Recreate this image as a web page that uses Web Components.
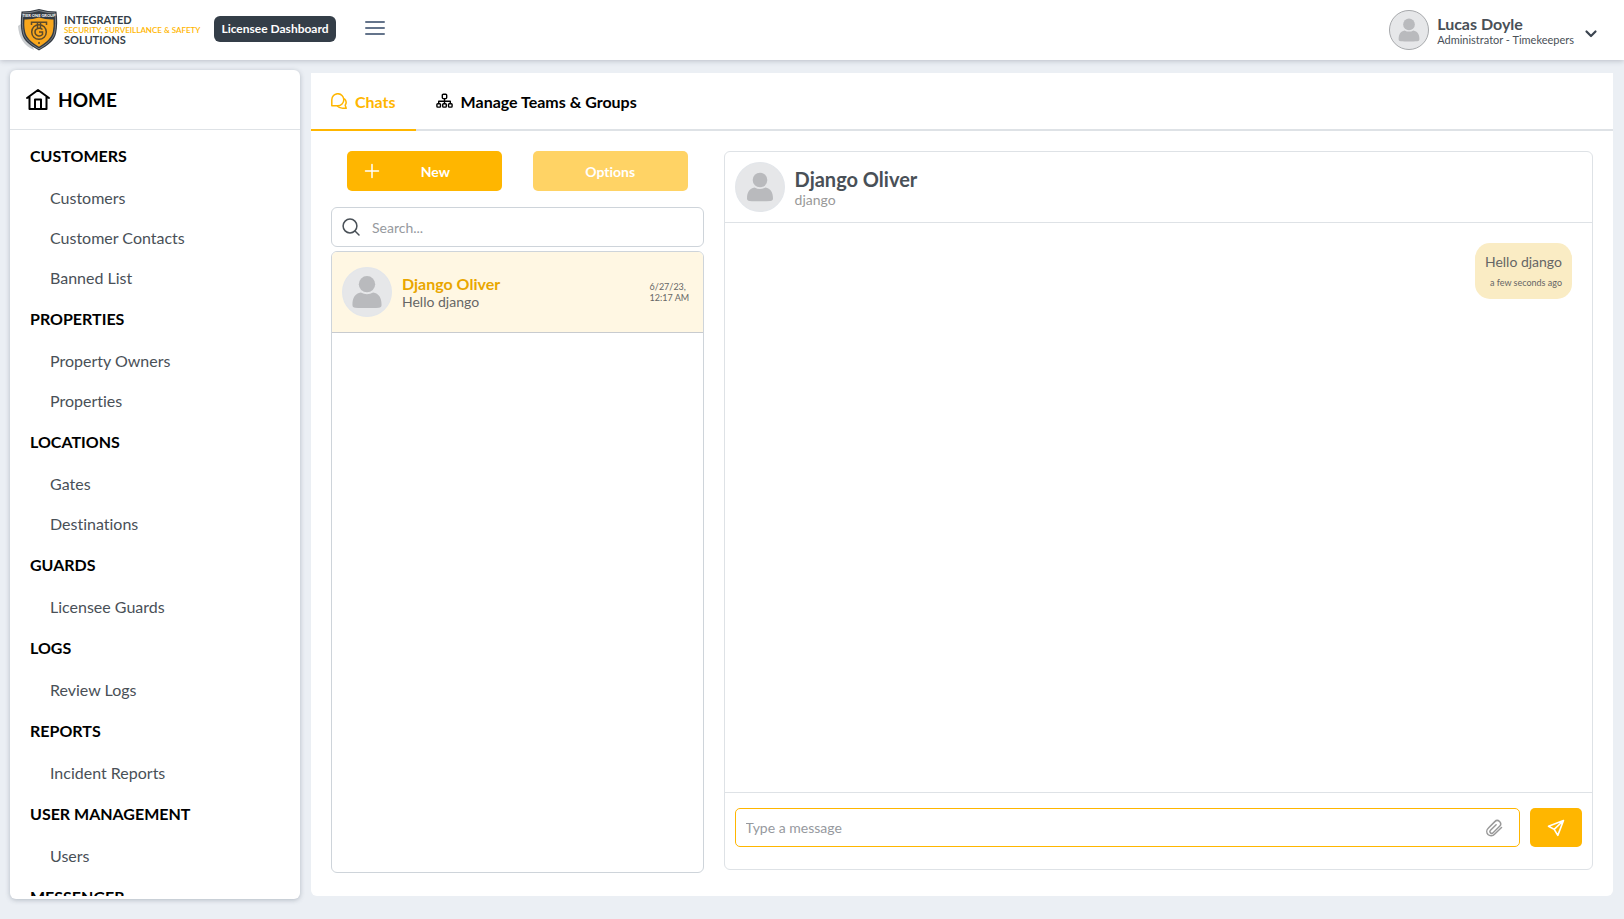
<!DOCTYPE html>
<html lang="en">
<head>
<meta charset="utf-8">
<meta name="viewport" content="width=device-width, initial-scale=1">
<title>Licensee Dashboard</title>
<style>
  html { height: 100%; }
  body {
    margin: 0; min-height: 100%; background: #ebeff4;
    font: 16px/24px Lato, "Open Sans", sans-serif; font-variant-ligatures: none; color: #495057;
    --accent: #ffb600; --line: #dee2e6; --edge: #ced4da;
  }
</style>
</head>
<body>
<dashboard-app></dashboard-app>

<template id="dashboard-app">
  <style>
    :host { display: block; }
    .page {
      display: grid; grid-template: minmax(0, 1fr) / 290px minmax(0, 1fr); gap: 11px;
      box-sizing: border-box; height: calc(100vh - 60px); padding: 10px 11px 20px 10px;
    }
    main { margin: 3px 0; min-height: 0; }
  </style>
  <top-bar></top-bar>
  <div class="page">
    <side-menu></side-menu>
    <main><chat-workspace></chat-workspace></main>
  </div>
</template>

<template id="top-bar">
  <style>
    :host { display: block; position: relative; background: #fff; box-shadow: 0 1px 5px rgba(60, 70, 90, .28); }
    header { display: flex; align-items: center; height: 60px; box-sizing: border-box; padding: 0 25px 0 17px; }
    .badge { margin: 0 0 2px 14px; padding: 0 7px; border-radius: 6px; background: #343e48; color: #fff; font-size: 12px; font-weight: 700; line-height: 26px; }
    button { border: 0; background: none; padding: 0; font: inherit; color: inherit; display: flex; cursor: pointer; }
    .menu { margin: 0 0 4px 28px; color: #64748b; }
    .user { margin-left: auto; align-items: center; text-align: left; gap: 8px; }
    .who { display: grid; line-height: 15px; padding: 2px 1px 0 0; }
    .name { font-weight: 700; font-size: 16px; line-height: 17px; }
    .role { font-size: 11px; }
    .arrow { margin-top: 8px; }
  </style>
  <header>
    <brand-logo></brand-logo>
    <span class="badge">Licensee Dashboard</span>
    <button class="menu" type="button" aria-label="Toggle menu">
      <svg width="22" height="18" viewBox="0 0 22 18" fill="none" stroke="currentColor" stroke-width="2" stroke-linecap="round"><path d="M2 3h18M2 9h18M2 15h18"/></svg>
    </button>
    <button class="user" type="button">
      <user-avatar style="--size:40px;--ring:#a3a5a8"></user-avatar>
      <span class="who"><span class="name">Lucas Doyle</span><span class="role">Administrator - Timekeepers</span></span>
      <svg class="arrow" width="16" height="16" viewBox="0 0 16 16" fill="none" stroke="#3b4550" stroke-width="2.2" stroke-linecap="round" stroke-linejoin="round"><path d="M3.500 5.500 8 10l4.500-4.500"/></svg>
    </button>
  </header>
</template>

<template id="brand-logo">
  <style>
    :host { display: block; }
    a { display: flex; align-items: center; gap: 5px; text-decoration: none; color: #343e48; }
    .words { display: grid; font-weight: 700; font-size: 11px; line-height: 10px; white-space: nowrap; }
    .mid { color: var(--accent); font-size: 8px; font-weight: 600; }
  </style>
  <a href="#">
    <svg width="42" height="44" viewBox="0 0 42 44" aria-hidden="true">
      <path d="M1 18c1 12 6 20 16 24L7 14z" fill="#c9cccf"/>
      <path d="M4.500 3.500Q13 3.500 22 1q9 2.500 17.500 2.500c1 8 1 16-.5 22-1.500 7-8 12-17 17-9-5-15.500-10-17-17-1.500-6-1.500-14-.5-22z" fill="#343b43"/>
      <path d="M6 5Q14 5 22 2.500 30 5 38 5c.8 8 .8 14-.5 20-1.500 6-7 11-15.500 15.800C13.500 36 8 31 6.500 25 5.200 19 5.200 13 6 5z" fill="none" stroke="#a9adb0" stroke-width=".6"/>
      <path d="M7.500 11.500Q15 11.800 22 9.500q7 2.300 14.500 2 .5 7-.7 12.500C34.500 29.500 30 34 22 38.800 14 34 9.500 29.500 8.200 24 7 18.500 7.200 15 7.500 11.500z" fill="#f9a71d"/>
      <g fill="none" stroke="#5b4a2b" stroke-width="1.500">
        <circle cx="22" cy="24" r="7.300"/>
        <path d="M14.500 17v-2.700h15V17M20.500 14.500V21M23.500 14.500V21M25.500 21.500c-3-2.500-7.500-1-7.500 2.500 0 4 5 5 7.500 2.500V24H22"/>
      </g>
      <circle cx="22" cy="35" r="1" fill="#5b4a2b"/>
      <text x="22" y="9" text-anchor="middle" font-family="Lato, sans-serif" font-size="4" font-weight="700" fill="#fff">TIER ONE GROUP</text>
    </svg>
    <span class="words"><span>INTEGRATED</span><span class="mid">SECURITY, SURVEILLANCE &amp; SAFETY</span><span>SOLUTIONS</span></span>
  </a>
</template>

<template id="user-avatar">
  <style>
    :host { display: block; flex: none; width: var(--size, 50px); height: var(--size, 50px); }
    svg { display: block; width: 100%; height: 100%; }
    .ring { stroke: var(--ring, #e3e6ea); }
    .person { transform: scale(var(--person, 1)); transform-origin: 50% 50%; }
  </style>
  <svg viewBox="0 0 50 50" aria-hidden="true">
    <circle class="ring" cx="25" cy="25" r="24.400" fill="#e6e7e9" stroke-width="1.200"/>
    <g class="person" fill="#b9babd">
      <circle cx="25" cy="18" r="7.300"/>
      <path d="M12 36.500c0-6.500 2.500-10 7.500-11q5.500 3 11 0c5 1 7.500 4.500 7.500 11 0 1.500-1 2.500-2.500 2.500-6 .4-15 .4-21 0-1.500 0-2.500-1-2.500-2.500z"/>
    </g>
  </svg>
</template>

<template id="side-menu">
  <style>
    :host { display: flex; flex-direction: column; box-sizing: border-box; min-height: 0; padding-bottom: 3px; background: #fff; border-radius: 6px; box-shadow: 0 1px 5px rgba(60, 70, 90, .32); }
    .home { display: flex; flex: none; align-items: center; gap: 7px; height: 59px; padding-left: 15px; border-bottom: 1px solid var(--line); color: #000; font-size: 19px; font-weight: 700; text-decoration: none; }
    nav { flex: 1; min-height: 0; overflow: hidden; padding-top: 5px; }
  </style>
  <a class="home" href="#">
    <svg width="26" height="24" viewBox="0 0 26 24" fill="none" stroke="currentColor" stroke-width="2" stroke-linejoin="round" stroke-linecap="round"><path d="M2 10 13 2l11 8M4.500 8.500V21h17V8.500M10 21v-9.500h6V21"/></svg>
    <span>HOME</span>
  </a>
  <nav aria-label="Main">
    <menu-section heading="CUSTOMERS" items="Customers|Customer Contacts|Banned List"></menu-section>
    <menu-section heading="PROPERTIES" items="Property Owners|Properties"></menu-section>
    <menu-section heading="LOCATIONS" items="Gates|Destinations"></menu-section>
    <menu-section heading="GUARDS" items="Licensee Guards"></menu-section>
    <menu-section heading="LOGS" items="Review Logs"></menu-section>
    <menu-section heading="REPORTS" items="Incident Reports"></menu-section>
    <menu-section heading="USER MANAGEMENT" items="Users"></menu-section>
    <menu-section heading="MESSENGER"></menu-section>
  </nav>
</template>

<template id="menu-section">
  <style>
    :host { display: block; }
    h2 { margin: 0; padding: 0 0 2px 20px; font-size: 16px; font-weight: 700; line-height: 41px; color: #000; }
    ul { margin: 0; padding: 0; list-style: none; }
    a { display: block; padding-left: 40px; line-height: 40px; color: #495057; text-decoration: none; }
  </style>
  <h2></h2><ul></ul>
</template>

<template id="chat-workspace">
  <style>
    :host { display: flex; flex-direction: column; height: 100%; background: #fff; border-radius: 0 0 6px 6px; }
    .tabs { display: flex; flex: none; border-bottom: 2px solid var(--line); }
    .tabs button { display: flex; align-items: center; gap: 8px; height: 58px; margin-bottom: -2px; padding: 0 20px; border: 0; border-bottom: 2px solid transparent; background: none; font: 700 16px/24px Lato, sans-serif; font-variant-ligatures: none; color: #000; cursor: pointer; }
    .tabs button[aria-selected="true"] { color: var(--accent); border-color: var(--accent); }
    .tabs span { padding-top: 2px; }
    .cols { flex: 1; min-height: 0; display: grid; grid-template: minmax(0, 1fr) / 3fr 7fr; gap: 20px; padding: 20px 20px 23px; }
    chat-thread { margin-bottom: 3px; }
  </style>
  <div class="tabs" role="tablist">
    <button type="button" role="tab" aria-selected="true">
      <svg width="16" height="16" viewBox="0 0 16 16" fill="none" stroke="currentColor" stroke-width="1.500" stroke-linejoin="round"><path d="M.8 12.700V6.800a6 6 0 1 1 6 5.900zM13.200 5.500c2.200 2 2.300 4.700 1 6.700l1 3.100c-3.500.2-7 0-9.400-2.500"/></svg>
      <span>Chats</span>
    </button>
    <button type="button" role="tab" aria-selected="false">
      <svg width="17" height="16" viewBox="0 0 17 16" fill="none" stroke="currentColor" stroke-width="1.400" stroke-linejoin="round"><rect x="6.300" y="1.200" width="4.400" height="4.400" rx="1"/><rect x=".9" y="10.700" width="3.600" height="3.400" rx=".8"/><rect x="6.700" y="10.700" width="3.600" height="3.400" rx=".8"/><rect x="12.500" y="10.700" width="3.600" height="3.400" rx=".8"/><path d="M8.500 5.600v5M2.700 10.500V8.200h11.600v2.300"/></svg>
      <span>Manage Teams &amp; Groups</span>
    </button>
  </div>
  <div class="cols">
    <chat-list></chat-list>
    <chat-thread></chat-thread>
  </div>
</template>

<template id="chat-list">
  <style>
    :host { display: flex; flex-direction: column; min-width: 0; }
    .actions { display: grid; grid-template-columns: 1fr 1fr; gap: 31px; padding: 0 16px; margin-bottom: 16px; }
    .actions button { display: flex; align-items: center; gap: 4px; height: 40px; padding: 2px 16px 0; border: 0; border-radius: 5px; background: var(--accent); color: #fff; font: 700 14px/20px Lato, sans-serif; font-variant-ligatures: none; }
    .actions span { flex: 1; text-align: center; }
    .actions svg { margin-bottom: 2px; }
    .actions button:disabled { opacity: .6; }
    .search { display: flex; flex: none; align-items: center; gap: 12px; height: 38px; padding: 0 10px; border: 1px solid var(--edge); border-radius: 6px; margin-bottom: 4px; }
    input { flex: 1; min-width: 0; height: 100%; border: 0; padding: 1px 0 0; outline: 0; background: none; box-sizing: border-box; font: 14px/20px Lato, sans-serif; color: #495057; }
    input::placeholder { color: #96999e; }
    ul { flex: 1; min-height: 0; margin: 0; padding: 0; list-style: none; border: 1px solid var(--edge); border-radius: 6px; overflow: hidden; }
    li { display: flex; align-items: center; gap: 10px; height: 80px; padding: 0 14px 0 10px; border-bottom: 1px solid #c8cbcf; background: #fff7e3; }
    user-avatar { --person: 1.12; }
    .text { flex: 1; min-width: 0; display: grid; padding-top: 2px; font-size: 14px; line-height: 18px; color: #666; }
    strong { font-size: 16px; color: #e9a600; }
    time { width: 39px; font-size: 9px; line-height: 11px; color: #666; white-space: nowrap; }
  </style>
  <div class="actions">
    <button type="button"><svg width="18" height="18" viewBox="0 0 18 18" stroke="currentColor" stroke-width="1.500" stroke-linecap="round"><path d="M9 2.500v13M2.500 9h13"/></svg><span>New</span></button>
    <button type="button" disabled><span>Options</span></button>
  </div>
  <div class="search">
    <svg width="18" height="18" viewBox="0 0 18 18" fill="none" stroke="#495057" stroke-width="1.500" stroke-linecap="round"><circle cx="8" cy="8" r="6.900"/><path d="m13 13 4 4"/></svg>
    <input type="search" placeholder="Search..." aria-label="Search">
  </div>
  <ul>
    <li>
      <user-avatar></user-avatar>
      <div class="text"><strong>Django Oliver</strong><span>Hello django</span></div>
      <time>6/27/23,<br>12:17 AM</time>
    </li>
  </ul>
</template>

<template id="chat-thread">
  <style>
    :host { display: flex; flex-direction: column; min-width: 0; border: 1px solid var(--line); border-radius: 6px; }
    header { display: flex; flex: none; align-items: center; gap: 10px; height: 70px; padding: 0 10px; border-bottom: 1px solid var(--line); }
    h1 { margin: 0; padding-top: 3px; font-size: 20px; font-weight: 700; line-height: 22px; }
    p { margin: 0; font-size: 14px; line-height: 19px; color: #999; }
    .log { flex: 1; min-height: 0; padding: 20px; display: flex; flex-direction: column; align-items: flex-end; }
    form { display: flex; flex: none; gap: 10px; height: 39px; padding: 15px 10px 22px; border-top: 1px solid var(--line); }
    .field { flex: 1; display: flex; align-items: center; box-sizing: border-box; padding: 0 16px 0 10px; border: 1px solid var(--accent); border-radius: 5px; }
    input { flex: 1; min-width: 0; border: 0; padding: 0; outline: 0; background: none; font: 14px/20px Lato, sans-serif; color: #495057; }
    input::placeholder { color: #96999e; }
    button { display: flex; align-items: center; justify-content: center; border: 0; padding: 0; background: none; color: #999; cursor: pointer; }
    .send { width: 52px; border-radius: 5px; background: var(--accent); color: #fff; }
  </style>
  <header>
    <user-avatar></user-avatar>
    <div><h1>Django Oliver</h1><p>django</p></div>
  </header>
  <div class="log"><chat-bubble when="a few seconds ago">Hello django</chat-bubble></div>
  <form>
    <div class="field">
      <input type="text" placeholder="Type a message" aria-label="Type a message">
      <button type="button" aria-label="Attach file"><svg width="18" height="18" viewBox="0 0 18 18" fill="none" stroke="currentColor" stroke-width="1.500" stroke-linecap="round" stroke-linejoin="round"><path d="m16.500 8.500-7 6.700a4.500 4.500 0 0 1-6.500.3 4.500 4.500 0 0 1 .2-6.300l6.600-6.600a3.300 3.300 0 0 1 4.800 4.700l-6.500 6.500a1.800 1.800 0 0 1-2.600-2.500l5.600-5.600"/></svg></button>
    </div>
    <button class="send" type="button" aria-label="Send"><svg width="18" height="18" viewBox="0 0 18 18" fill="none" stroke="currentColor" stroke-width="1.600" stroke-linejoin="round" stroke-linecap="round"><path d="M16.500 1.500 1.500 7.200l5.700 3.200 3.600 6zM7.200 10.400l9.300-8.900"/></svg></button>
  </form>
</template>

<template id="chat-bubble">
  <style>
    :host { display: block; padding: 9px 10px 10px; border-radius: 15px; background: #faecc4; color: #666; font-size: 14px; line-height: 20px; text-align: right; }
    small { display: block; margin-top: 5px; font-size: 9px; line-height: 12px; }
  </style>
  <slot></slot><small></small>
</template>

<script>
  class TemplateElement extends HTMLElement {
    constructor() {
      super();
      const template = document.getElementById(this.localName);
      this.attachShadow({ mode: "open" }).append(template.content.cloneNode(true));
    }
  }
  class MenuSection extends TemplateElement {
    connectedCallback() {
      this.shadowRoot.querySelector("h2").textContent = this.getAttribute("heading");
      const labels = (this.getAttribute("items") || "").split("|").filter(Boolean);
      const rows = labels.map(label => {
        const row = document.createElement("li");
        const link = document.createElement("a");
        link.href = "#";
        link.textContent = label;
        row.append(link);
        return row;
      });
      this.shadowRoot.querySelector("ul").replaceChildren(...rows);
    }
  }
  class ChatBubble extends TemplateElement {
    connectedCallback() {
      this.shadowRoot.querySelector("small").textContent = this.getAttribute("when");
    }
  }
  customElements.define("user-avatar", class extends TemplateElement {});
  customElements.define("brand-logo", class extends TemplateElement {});
  customElements.define("top-bar", class extends TemplateElement {});
  customElements.define("menu-section", MenuSection);
  customElements.define("side-menu", class extends TemplateElement {});
  customElements.define("chat-bubble", ChatBubble);
  customElements.define("chat-list", class extends TemplateElement {});
  customElements.define("chat-thread", class extends TemplateElement {});
  customElements.define("chat-workspace", class extends TemplateElement {});
  customElements.define("dashboard-app", class extends TemplateElement {});
</script>
</body>
</html>
